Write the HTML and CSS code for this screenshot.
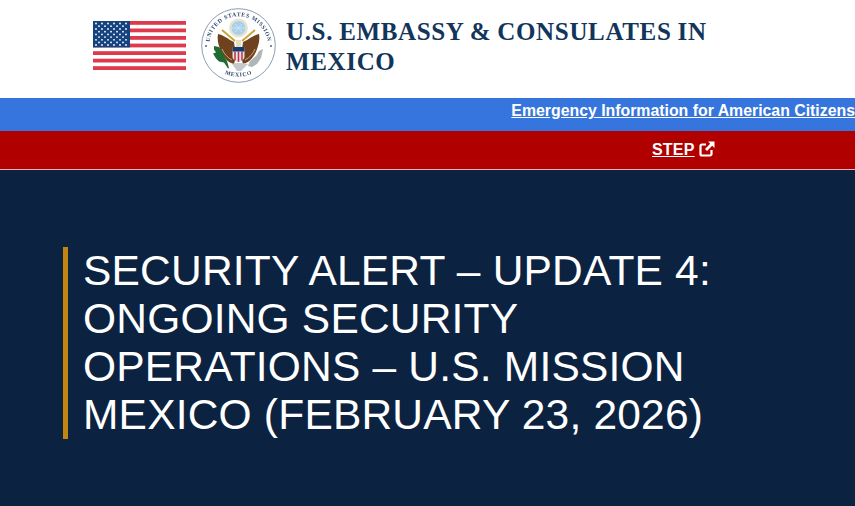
FILE: index.html
```html
<!DOCTYPE html>
<html lang="en">
<head>
<meta charset="utf-8">
<title>Security Alert</title>
<link rel="stylesheet" href="styles.css">
</head>
<body>
<header class="masthead">
  <svg class="flag" viewBox="0 0 93 49" aria-hidden="true">
    <rect width="93" height="49" fill="#fff"/>
    <g fill="#dd3b4d">
      <rect y="0" width="93" height="3.8"/><rect y="7.5" width="93" height="3.8"/><rect y="15" width="93" height="3.8"/><rect y="22.6" width="93" height="3.8"/><rect y="30.2" width="93" height="3.8"/><rect y="37.7" width="93" height="3.8"/><rect y="45.2" width="93" height="3.8"/>
    </g>
    <rect width="37" height="26.4" fill="#14437f"/>
    <g fill="#fff">
      <circle cx="3" cy="2.5" r=".9"/><circle cx="9" cy="2.5" r=".9"/><circle cx="15" cy="2.5" r=".9"/><circle cx="21" cy="2.5" r=".9"/><circle cx="27" cy="2.5" r=".9"/><circle cx="33" cy="2.5" r=".9"/>
      <circle cx="6" cy="5.2" r=".9"/><circle cx="12" cy="5.2" r=".9"/><circle cx="18" cy="5.2" r=".9"/><circle cx="24" cy="5.2" r=".9"/><circle cx="30" cy="5.2" r=".9"/>
      <circle cx="3" cy="8" r=".9"/><circle cx="9" cy="8" r=".9"/><circle cx="15" cy="8" r=".9"/><circle cx="21" cy="8" r=".9"/><circle cx="27" cy="8" r=".9"/><circle cx="33" cy="8" r=".9"/>
      <circle cx="6" cy="10.7" r=".9"/><circle cx="12" cy="10.7" r=".9"/><circle cx="18" cy="10.7" r=".9"/><circle cx="24" cy="10.7" r=".9"/><circle cx="30" cy="10.7" r=".9"/>
      <circle cx="3" cy="13.4" r=".9"/><circle cx="9" cy="13.4" r=".9"/><circle cx="15" cy="13.4" r=".9"/><circle cx="21" cy="13.4" r=".9"/><circle cx="27" cy="13.4" r=".9"/><circle cx="33" cy="13.4" r=".9"/>
      <circle cx="6" cy="16.1" r=".9"/><circle cx="12" cy="16.1" r=".9"/><circle cx="18" cy="16.1" r=".9"/><circle cx="24" cy="16.1" r=".9"/><circle cx="30" cy="16.1" r=".9"/>
      <circle cx="3" cy="18.8" r=".9"/><circle cx="9" cy="18.8" r=".9"/><circle cx="15" cy="18.8" r=".9"/><circle cx="21" cy="18.8" r=".9"/><circle cx="27" cy="18.8" r=".9"/><circle cx="33" cy="18.8" r=".9"/>
      <circle cx="6" cy="21.4" r=".9"/><circle cx="12" cy="21.4" r=".9"/><circle cx="18" cy="21.4" r=".9"/><circle cx="24" cy="21.4" r=".9"/><circle cx="30" cy="21.4" r=".9"/>
      <circle cx="3" cy="24" r=".9"/><circle cx="9" cy="24" r=".9"/><circle cx="15" cy="24" r=".9"/><circle cx="21" cy="24" r=".9"/><circle cx="27" cy="24" r=".9"/><circle cx="33" cy="24" r=".9"/>
    </g>
  </svg>
  <svg class="seal" viewBox="0 0 75 75" aria-hidden="true">
    <defs>
      <path id="arc-top" d="M8.300 37.500a29.200 29.200 0 0 1 58.400 0"/>
      <path id="arc-bottom" d="M12 58a36 36 0 0 0 51 0"/>
    </defs>
    <circle cx="37.500" cy="37.500" r="36.800" fill="#fff" stroke="#7f90aa" stroke-width=".9"/>
    <text class="seal-text"><textPath href="#arc-top" startOffset="50%" text-anchor="middle">UNITED STATES MISSION</textPath></text>
    <text class="seal-text"><textPath href="#arc-bottom" startOffset="50%" text-anchor="middle">MEXICO</textPath></text>
    <circle cx="5" cy="38" r="1" fill="#4f6486"/><circle cx="70" cy="38" r="1" fill="#4f6486"/>
    <circle cx="37.500" cy="20" r="9.500" fill="#e8e3cf"/>
    <circle cx="37.500" cy="20" r="7" fill="#a8d0ea"/>
    <path d="M34 16l7 8M41 16l-7 8M31 20h13" stroke="#d5e8f5" stroke-width=".8"/>
    <path d="M17 26C22 27 26 30 29 32L33 34 35 48 33 56C27 55 21 48 19 41 17 36 16 30 17 26Z" fill="#6f421d"/>
    <path d="M58 26C53 27 49 30 46 32L42 34 40 48 42 56C48 55 54 48 56 41 58 36 59 30 58 26Z" fill="#6f421d"/>
    <path d="M21 41C23 46 27 50 31 52M54 41C52 46 48 50 44 52" stroke="#c9a87a" stroke-width="1" fill="none"/>
    <path d="M21 22L34 33M54 22L41 33" stroke="#c9a53f" stroke-width="2"/>
    <path d="M35 32h5v7h-5z" fill="#e8dcc0"/>
    <path d="M31.500 39h12v10q0 3-6 5q-6-2-6-5z" fill="#ecdfe0"/>
    <path d="M31.500 39h12v4.500h-12z" fill="#123a70"/>
    <path d="M34 43.500v9M37.500 43.500v10.500M41 43.500v9" stroke="#b8344a" stroke-width="1.500"/>
    <path d="M13 38l5 1 3 4 2 5 3 5 2 7-1 .5-4-6-5-1-3-3-3-5 3-1-2-3z" fill="#1f6b32"/>
    <path d="M62 41l-4 2-3 5-6 5-2 5 4 1 5-3 4-6z" fill="#b0b5b5"/>
    <path d="M31 56l4-1 5 0 7 1-4 4-3 3h-4l-2-3z" fill="#c6c9cc"/>
  </svg>
  <h2 class="site-name">U.S. EMBASSY &amp; CONSULATES IN MEXICO</h2>
</header>
<nav class="bar bar-blue"><a href="#">Emergency Information for American Citizens</a></nav>
<nav class="bar bar-red">
  <a href="#">STEP</a>
  <svg class="ext" viewBox="0 0 16 16" aria-hidden="true">
    <path d="M7 3.500H3A1.500 1.500 0 0 0 1.500 5v8A1.500 1.500 0 0 0 3 14.500h8a1.500 1.500 0 0 0 1.500-1.500V9" fill="none" stroke="#fff" stroke-width="2.200"/>
    <path d="M9 0.500H15.500V7L13.200 4.800 8 10 6 8l5.200-5.200z" fill="#fff"/>
  </svg>
</nav>
<main class="hero">
  <h1 class="headline">SECURITY ALERT – UPDATE 4: ONGOING SECURITY OPERATIONS – U.S. MISSION MEXICO (FEBRUARY 23, 2026)</h1>
</main>
</body>
</html>
```
FILE: styles.css
```css
* { box-sizing: border-box; }
html, body { margin: 0; height: 100%; overflow: hidden; }
body { font-family: "Liberation Sans", Arial, sans-serif; background: #0b2240; display: flex; flex-direction: column; }
.masthead { height: 98px; background: #fff; display: flex; align-items: flex-start; padding-left: 93px; flex: none; }
.flag { width: 93px; height: 49px; margin-top: 21px; flex: none; filter: blur(.35px); }
.seal { width: 75px; height: 75px; margin: 8px 0 0 15px; flex: none; filter: blur(.35px); }
.seal-text { font: 700 5.800px "Liberation Serif", serif; fill: #33496b; letter-spacing: .6px; }
.site-name { margin: 17px 0 0 10px; width: 470px; font: 700 25px/30px "Liberation Serif", serif; letter-spacing: .65px; word-spacing: -.8px; color: #12355b; }
.bar { flex: none; display: flex; align-items: center; }
.bar a { color: #fff; font-weight: 700; text-decoration: underline; }
.bar-blue { height: 33px; background: #3575dd; justify-content: flex-end; padding-bottom: 7px; font-size: 15.850px; }
.bar-blue a { line-height: 18px; }
.bar-red { height: 39px; background: #b00000; border-bottom: 1px solid #e8b0b0; padding: 0 0 1px 652px; font-size: 16px; }
.bar-red a { letter-spacing: .2px; }
.ext { width: 16px; height: 16px; margin: 0 0 2px 4px; }
.hero { flex: 1; padding: 77px 0 0 63px; }
.headline { margin: 0; width: 680px; border-left: 5px solid #c0860f; padding-left: 15px; font-weight: 400; font-size: 42.500px; letter-spacing: .2px; line-height: 48px; color: #fff; }
```
